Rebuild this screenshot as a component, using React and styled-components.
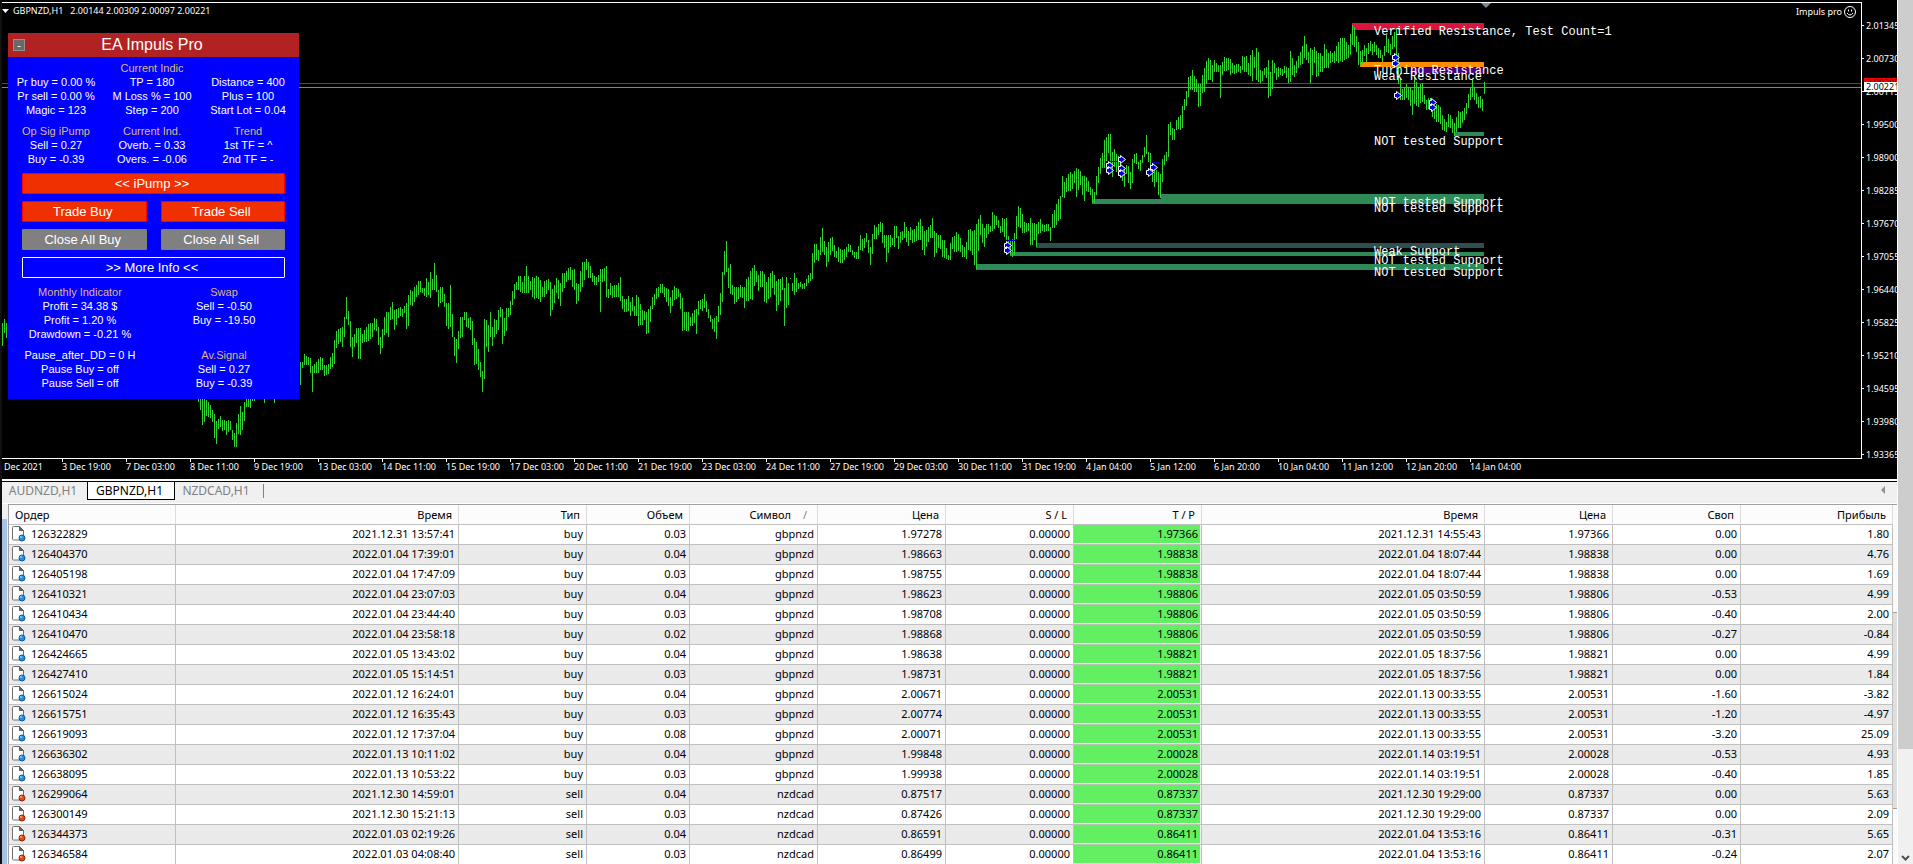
import React from 'react'
import styled, { createGlobalStyle } from 'styled-components'

const GlobalStyle = createGlobalStyle`
  * {
    box-sizing: border-box;
  }

  body {
    margin: 0;
    background: #f0f0f0;
    font-family: 'Noto Sans', 'Open Sans', sans-serif;
    font-size: 11px;
    color: #000;
  }

  button {
    margin: 0;
    padding: 0;
    font: inherit;
    cursor: pointer;
  }
`

// x, high, low. Bars are 2px apart, missing ones are interpolated.
const BARS = `
2,323,346 4,319,333 6,323,338 60,340,360 150,360,380 196,380,396 200,390,410 202,392,425 206,400,416 212,410,422
214,414,438 216,421,444 218,419,429 220,416,427 224,420,430 226,421,435 230,421,430 232,430,440 234,433,447 236,423,447
238,414,434 240,406,435 242,412,430 244,402,421 246,395,407 250,392,408 252,385,401 262,380,396 264,384,403 266,380,396
272,380,396 274,384,403 276,376,390 298,364,380 300,362,385 302,362,368 304,354,365 308,357,365 310,358,373 312,366,392
314,364,373 318,359,373 322,358,370 324,365,376 328,364,374 332,353,367 334,340,364 336,331,348 340,328,342 342,327,347
344,317,337 346,297,319 348,311,325 350,321,347 352,337,357 354,334,347 356,328,343 358,328,359 360,328,359 362,334,343
364,330,342 368,324,341 370,323,339 374,318,330 376,319,331 378,327,345 380,337,354 382,329,348 384,317,335 386,312,333
388,312,337 390,307,320 392,302,319 394,310,330 396,309,325 398,308,318 402,309,317 404,306,313 406,303,329 408,295,326
410,290,305 414,287,302 416,285,297 418,281,295 420,281,292 422,288,293 424,288,296 426,278,297 428,282,295 430,272,298
432,279,290 434,263,290 436,275,292 438,290,307 442,287,302 444,294,307 446,303,326 448,303,329 450,285,327 452,314,337
454,337,356 456,339,363 458,331,349 460,317,338 462,317,337 464,312,320 466,312,327 468,318,328 470,317,330 472,321,345
474,338,365 476,342,364 478,349,370 480,362,377 482,371,392 484,319,379 486,320,347 488,325,352 490,312,337 492,327,346
494,319,337 496,320,334 498,310,330 500,307,317 502,309,344 504,318,336 506,308,331 508,308,317 510,301,315 512,291,305
514,284,299 516,282,290 518,276,290 520,276,292 522,282,293 524,276,293 526,266,293 528,276,293 530,281,290 532,277,297
536,276,298 540,280,302 542,287,297 544,281,297 548,279,290 550,282,316 552,289,310 556,278,293 560,283,306 562,273,292
566,271,282 570,267,280 574,269,290 576,283,304 578,284,301 582,262,287 586,259,270 588,262,278 592,273,282 596,277,285
598,275,282 600,269,312 602,269,282 604,268,281 606,266,297 608,289,298 610,283,295 616,285,297 618,283,297 620,277,301
622,296,309 626,299,312 628,296,311 630,302,316 632,297,311 634,306,316 636,295,316 638,297,326 640,304,325 644,311,320
646,312,334 648,309,333 650,306,322 652,297,309 656,288,299 658,287,297 662,284,293 664,287,297 668,289,306 670,297,313
672,290,306 674,286,300 678,289,297 680,293,309 682,298,331 684,312,330 688,312,331 690,317,326 692,313,326 694,310,323
696,309,334 698,301,315 700,300,309 704,294,308 706,301,312 708,309,318 710,315,322 714,318,332 716,316,339 718,306,322
720,293,315 722,272,302 724,251,275 726,241,272 728,268,288 730,264,294 732,285,295 734,287,304 738,287,299 742,287,298
744,287,308 746,279,301 748,277,301 752,268,300 754,265,286 756,271,282 758,275,291 762,271,287 764,274,302 766,282,303
770,273,297 772,271,288 774,275,295 776,281,311 780,279,301 782,277,290 784,288,326 786,277,308 788,283,305 790,278,279
792,283,291 794,273,295 796,278,292 798,283,289 802,284,289 806,279,286 810,273,281 812,253,279 814,244,263 816,244,260
818,250,261 822,228,252 824,241,255 826,247,267 828,242,262 832,237,251 834,245,257 836,251,258 838,247,262 840,249,263
846,247,257 848,244,252 852,250,255 856,252,259 858,246,259 860,235,250 864,238,248 866,233,242 868,240,253 870,247,265
872,234,254 874,225,239 876,227,239 880,222,232 882,223,243 884,235,248 886,235,262 888,235,253 892,238,245 894,226,247
896,226,238 898,236,249 902,231,240 904,222,238 908,231,246 910,227,240 914,229,242 918,222,240 920,219,240 922,226,250
924,231,255 926,230,247 930,225,238 932,218,238 934,231,257 938,235,248 944,240,258 948,255,260 950,243,260 952,237,249
956,232,252 960,238,252 964,247,257 966,242,259 968,230,250 972,231,255 974,230,265 976,224,269 980,215,235 984,228,247
986,224,238 990,226,232 992,212,231 996,216,225 1000,226,233 1002,218,232 1006,218,240 1008,236,243 1010,240,255
1014,233,255 1016,216,239 1018,206,227 1022,214,233 1024,222,233 1028,223,231 1030,218,245 1034,223,240 1036,224,247
1038,222,234 1040,219,233 1042,224,231 1048,224,231 1050,227,241 1052,214,228 1056,204,225 1060,196,219 1062,176,197
1064,182,198 1066,178,192 1070,172,191 1074,171,183 1076,168,197 1080,171,185 1084,176,201 1086,177,191 1090,187,195
1092,189,203 1094,192,203 1096,176,195 1098,167,183 1102,153,168 1104,140,168 1108,134,153 1110,134,163 1112,152,177
1114,149,167 1116,154,172 1120,160,170 1124,167,187 1126,165,174 1128,166,183 1130,172,189 1132,159,183 1134,154,163
1136,153,164 1138,162,169 1140,160,171 1142,155,163 1144,147,157 1146,135,154 1148,152,162 1150,153,173 1154,167,187
1156,170,182 1158,172,195 1160,174,198 1162,159,182 1164,155,165 1166,152,161 1168,124,157 1170,122,135 1174,129,140
1176,120,130 1180,115,130 1182,106,128 1184,99,110 1186,91,106 1188,77,97 1190,76,90 1192,70,90 1196,79,92 1198,84,107
1200,84,106 1202,75,93 1204,68,92 1206,61,84 1208,58,80 1210,60,80 1212,65,82 1214,60,72 1218,65,72 1220,65,98
1222,62,75 1224,57,71 1228,58,70 1230,59,75 1232,63,73 1236,64,73 1240,66,73 1242,56,70 1246,56,72 1248,63,75
1252,50,81 1254,57,68 1256,48,80 1258,52,82 1260,70,83 1264,68,75 1266,67,78 1268,60,98 1270,72,96 1272,60,89
1274,63,73 1276,68,80 1280,68,75 1284,66,73 1288,68,83 1290,51,82 1292,58,75 1294,65,77 1298,56,68 1300,52,65
1304,36,58 1306,44,60 1308,52,63 1310,48,83 1314,47,63 1316,51,77 1318,53,76 1322,56,72 1324,44,68 1328,53,68
1332,53,62 1336,46,61 1338,42,63 1342,38,62 1344,38,60 1348,45,58 1350,34,55 1352,25,45 1354,27,47 1356,36,52
1358,42,65 1360,51,66 1364,45,56 1366,48,62 1368,43,54 1374,42,52 1378,48,58 1382,55,62 1384,46,56 1386,35,52
1390,44,55 1392,36,49 1394,32,47 1396,28,55 1398,53,84 1400,78,100 1402,89,100 1406,84,98 1408,87,100 1412,90,115
1414,77,104 1418,87,107 1420,84,103 1422,83,102 1424,95,104 1426,100,110 1430,98,110 1434,108,119 1436,104,122
1440,107,124 1444,119,131 1446,122,132 1448,114,127 1452,119,133 1454,123,136 1458,111,128 1460,112,128 1462,111,123
1466,103,114 1468,94,108 1470,87,100 1472,80,97 1474,88,100 1478,97,108 1482,99,111 1484,82,94
`

function buildBarsPath (source) {
  const points = source.trim().split(/\s+/).map(p => p.split(',').map(Number))
  let path = ''
  points.forEach(([x, high, low], i) => {
    path += `M${x + 0.5} ${high}V${low}`
    const next = points[i + 1]
    if (!next) return
    for (let step = x + 2; step < next[0]; step += 2) {
      const t = (step - x) / (next[0] - x)
      const wobble = (step * 7) % 5 - 2
      const h = Math.round(high + (next[1] - high) * t + wobble)
      const l = Math.round(low + (next[2] - low) * t + wobble)
      path += `M${step + 0.5} ${h}V${l}`
    }
  })
  return path
}

const BARS_PATH = buildBarsPath(BARS)

const ZONE_END = 1484

const ZONES = [
  { x: 1352, y: 23, h: 7, color: '#dc143c' },
  { x: 1360, y: 62, h: 5, color: '#ff8c00' },
  { x: 1411, y: 68, h: 5, color: '#4b0082' },
  { x: 1455, y: 132, h: 4, color: '#2e8b57' },
  { x: 1161, y: 194, h: 10, color: '#2e8b57' },
  { x: 1092, y: 199, h: 5, color: '#2e8b57' },
  { x: 1036, y: 243, h: 5, color: '#2f4f4f' },
  { x: 1010, y: 252, h: 4, color: '#2e8b57' },
  { x: 976, y: 264, h: 6, color: '#2e8b57' }
]

const ZONE_LABELS = [
  [35, 'Verified Resistance, Test Count=1'],
  [74, 'Turning Resistance'],
  [80, 'Weak Resistance'],
  [145, 'NOT tested Support'],
  [206, 'NOT tested Support'],
  [212, 'NOT tested Support'],
  [255, 'Weak Support'],
  [264, 'NOT tested Support'],
  [276, 'NOT tested Support']
]

const ARROWS = [
  [1004, 242], [1004, 247], [1106, 162], [1106, 167], [1118, 156], [1118, 165], [1118, 170],
  [1150, 164], [1146, 169], [1392, 54], [1392, 60], [1394, 92], [1429, 99], [1429, 104]
]

const DASHES = [[1008, 240], [1110, 161], [1123, 163], [1152, 162], [1431, 97]]

const PRICES = [
  '2.01345', '2.00730', '2.00115', '1.99500', '1.98900', '1.98285', '1.97670',
  '1.97055', '1.96440', '1.95825', '1.95210', '1.94595', '1.93980', '1.93365'
]

const DATES = [
  '3 Dec 19:00', '7 Dec 03:00', '8 Dec 11:00', '9 Dec 19:00', '13 Dec 03:00', '14 Dec 11:00',
  '15 Dec 19:00', '17 Dec 03:00', '20 Dec 11:00', '21 Dec 19:00', '23 Dec 03:00', '24 Dec 11:00',
  '27 Dec 19:00', '29 Dec 03:00', '30 Dec 11:00', '31 Dec 19:00', '4 Jan 04:00', '5 Jan 12:00',
  '6 Jan 20:00', '10 Jan 04:00', '11 Jan 12:00', '12 Jan 20:00', '14 Jan 04:00'
]

const COLUMNS = [
  ['Ордер', 167], ['Время', 283], ['Тип', 128], ['Объем', 103], ['Символ', 128], ['Цена', 128],
  ['S / L', 128], ['T / P', 128], ['Время', 283], ['Цена', 128], ['Своп', 128], ['Прибыль', 152]
]

// order, open time, type, volume, symbol, open price, t/p, close time, swap, profit
const ORDERS = [
  ['126322829', '2021.12.31 13:57:41', 'buy', '0.03', 'gbpnzd', '1.97278', '1.97366', '2021.12.31 14:55:43', '0.00', '1.80'],
  ['126404370', '2022.01.04 17:39:01', 'buy', '0.04', 'gbpnzd', '1.98663', '1.98838', '2022.01.04 18:07:44', '0.00', '4.76'],
  ['126405198', '2022.01.04 17:47:09', 'buy', '0.03', 'gbpnzd', '1.98755', '1.98838', '2022.01.04 18:07:44', '0.00', '1.69'],
  ['126410321', '2022.01.04 23:07:03', 'buy', '0.04', 'gbpnzd', '1.98623', '1.98806', '2022.01.05 03:50:59', '-0.53', '4.99'],
  ['126410434', '2022.01.04 23:44:40', 'buy', '0.03', 'gbpnzd', '1.98708', '1.98806', '2022.01.05 03:50:59', '-0.40', '2.00'],
  ['126410470', '2022.01.04 23:58:18', 'buy', '0.02', 'gbpnzd', '1.98868', '1.98806', '2022.01.05 03:50:59', '-0.27', '-0.84'],
  ['126424665', '2022.01.05 13:43:02', 'buy', '0.04', 'gbpnzd', '1.98638', '1.98821', '2022.01.05 18:37:56', '0.00', '4.99'],
  ['126427410', '2022.01.05 15:14:51', 'buy', '0.03', 'gbpnzd', '1.98731', '1.98821', '2022.01.05 18:37:56', '0.00', '1.84'],
  ['126615024', '2022.01.12 16:24:01', 'buy', '0.04', 'gbpnzd', '2.00671', '2.00531', '2022.01.13 00:33:55', '-1.60', '-3.82'],
  ['126615751', '2022.01.12 16:35:43', 'buy', '0.03', 'gbpnzd', '2.00774', '2.00531', '2022.01.13 00:33:55', '-1.20', '-4.97'],
  ['126619093', '2022.01.12 17:37:04', 'buy', '0.08', 'gbpnzd', '2.00071', '2.00531', '2022.01.13 00:33:55', '-3.20', '25.09'],
  ['126636302', '2022.01.13 10:11:02', 'buy', '0.04', 'gbpnzd', '1.99848', '2.00028', '2022.01.14 03:19:51', '-0.53', '4.93'],
  ['126638095', '2022.01.13 10:53:22', 'buy', '0.03', 'gbpnzd', '1.99938', '2.00028', '2022.01.14 03:19:51', '-0.40', '1.85'],
  ['126299064', '2021.12.30 14:59:01', 'sell', '0.04', 'nzdcad', '0.87517', '0.87337', '2021.12.30 19:29:00', '0.00', '5.63'],
  ['126300149', '2021.12.30 15:21:13', 'sell', '0.03', 'nzdcad', '0.87426', '0.87337', '2021.12.30 19:29:00', '0.00', '2.09'],
  ['126344373', '2022.01.03 02:19:26', 'sell', '0.04', 'nzdcad', '0.86591', '0.86411', '2022.01.04 13:53:16', '-0.31', '5.65'],
  ['126346584', '2022.01.03 04:08:40', 'sell', '0.03', 'nzdcad', '0.86499', '0.86411', '2022.01.04 13:53:16', '-0.24', '2.07']
]

function PlotDrawing () {
  return (
    <Drawing aria-hidden='true'>
      <g transform='translate(-2 -3)'>
        <g shapeRendering='crispEdges'>
          {ZONES.map(z => (
            <rect key={`${z.x}-${z.y}`} x={z.x} y={z.y} width={ZONE_END - z.x} height={z.h} fill={z.color} />
          ))}
          <path d='M0 83.5H4000' stroke='#c01c1c' />
          <path d='M0 87.5H4000' stroke='#778899' />
          <path d={BARS_PATH} stroke='#32d232' />
          {DASHES.map(([x, y]) => (
            <path key={x} d={`M${x} ${y + 0.5}h8`} stroke='#0000c8' strokeDasharray='3 1' />
          ))}
        </g>
        <path d='M1481 3h10l-5 5z' fill='#778899' />
        {ARROWS.map(([x, y]) => (
          <path
            key={`${x}-${y}`}
            transform={`translate(${x} ${y})`}
            d='M0.5 1.5h2v-2l5 4l-5 4v-2h-2z'
            fill='#0000e0'
            stroke='#fff'
          />
        ))}
        <ZoneText>
          {ZONE_LABELS.map(([y, text]) => (
            <text key={y} x='1374' y={y}>{text}</text>
          ))}
        </ZoneText>
      </g>
    </Drawing>
  )
}

function Stat ({ title, lines, blank }) {
  return (
    <div>
      {(title || blank) && <StatTitle>{title || '\u00a0'}</StatTitle>}
      {lines.map(line => <div key={line}>{line}</div>)}
    </div>
  )
}

function AdvisorPanel () {
  return (
    <Panel>
      <PanelHeader>
        <CollapseButton aria-label='Collapse'>-</CollapseButton>
        <PanelTitle>EA Impuls Pro</PanelTitle>
      </PanelHeader>
      <PanelBody>
        <Stats $columns={3}>
          <Stat blank lines={['Pr buy = 0.00 %', 'Pr sell = 0.00 %', 'Magic = 123']} />
          <Stat title='Current Indic' lines={['TP = 180', 'M Loss % = 100', 'Step = 200']} />
          <Stat blank lines={['Distance = 400', 'Plus = 100', 'Start Lot = 0.04']} />
        </Stats>
        <Stats $columns={3}>
          <Stat title='Op Sig iPump' lines={['Sell = 0.27', 'Buy = -0.39']} />
          <Stat title='Current Ind.' lines={['Overb. = 0.33', 'Overs. = -0.06']} />
          <Stat title='Trend' lines={['1st TF = ^', '2nd TF = -']} />
        </Stats>
        <Actions>
          <ActionButton $tone='red' $wide>&lt;&lt; iPump &gt;&gt;</ActionButton>
          <ActionButton $tone='red'>Trade Buy</ActionButton>
          <ActionButton $tone='red'>Trade Sell</ActionButton>
          <ActionButton $tone='gray'>Close All Buy</ActionButton>
          <ActionButton $tone='gray'>Close All Sell</ActionButton>
          <ActionButton $tone='outline' $wide>&gt;&gt; More Info &lt;&lt;</ActionButton>
        </Actions>
        <Stats $columns={2}>
          <Stat title='Monthly Indicator' lines={['Profit = 34.38 $', 'Profit = 1.20 %', 'Drawdown = -0.21 %']} />
          <Stat title='Swap' lines={['Sell = -0.50', 'Buy = -19.50']} />
        </Stats>
        <Stats $columns={2}>
          <Stat lines={['Pause_after_DD = 0 H', 'Pause Buy = off', 'Pause Sell = off']} />
          <Stat title='Av.Signal' lines={['Sell = 0.27', 'Buy = -0.39']} />
        </Stats>
      </PanelBody>
    </Panel>
  )
}

function Chart () {
  return (
    <ChartArea>
      <ChartTop>
        <Plot>
          <PlotDrawing />
          <PlotCaption>
            <svg width='7' height='4'><path d='M0 0h7l-3.500 4z' fill='#fff' /></svg>
            <span>GBPNZD,H1&nbsp;&nbsp; 2.00144 2.00309 2.00097 2.00221</span>
          </PlotCaption>
          <ExpertName>
            Impuls pro
            <svg width='12' height='12' fill='none' stroke='#fff'>
              <circle cx='6' cy='6' r='5.500' />
              <path d='M3 7q3 4 6 0M4.500 3.500v2M7.500 3.500v2' />
            </svg>
          </ExpertName>
          <AdvisorPanel />
        </Plot>
        <PriceAxis>
          {PRICES.map(price => <Price key={price}>{price}</Price>)}
          <AskTag>2.00290</AskTag>
          <BidTag>2.00221</BidTag>
        </PriceAxis>
      </ChartTop>
      <DateAxis>
        <FirstDate>Dec 2021</FirstDate>
        {DATES.map(date => <DateMark key={date}>{date}</DateMark>)}
      </DateAxis>
    </ChartArea>
  )
}

function OrderIcon ({ type }) {
  const color = type === 'buy' ? '#1e90e0' : '#e04818'
  const edge = type === 'buy' ? '#0c5c9c' : '#942408'
  return (
    <svg width='15' height='16' aria-hidden='true'>
      <path d='M1.500 1.500q0-1 1-1h6l4 4v8.500q0 1-1 1h-9q-1 0-1-1z' fill='#fff' stroke='#707070' />
      <path d='M8.500 .5v4h4z' fill='#606060' stroke='#606060' />
      <circle cx='11' cy='12' r='3' fill={color} stroke={edge} />
      <circle cx='10' cy='11' r='1' fill='#fff' fillOpacity='.6' />
    </svg>
  )
}

function Orders () {
  return (
    <OrdersTable>
      <colgroup>
        {COLUMNS.map(([name, width], i) => <col key={i} width={width} />)}
      </colgroup>
      <thead>
        <tr>
          {COLUMNS.map(([name], i) => (
            <HeadCell key={i} $left={i === 0}>
              {name}
              {name === 'Символ' && <SortMark>/</SortMark>}
            </HeadCell>
          ))}
        </tr>
      </thead>
      <tbody>
        {ORDERS.map(([id, opened, type, volume, symbol, price, target, closed, swap, profit]) => (
          <Row key={id}>
            <Cell>
              <OrderId><OrderIcon type={type} />{id}</OrderId>
            </Cell>
            <Cell>{opened}</Cell>
            <Cell>{type}</Cell>
            <Cell>{volume}</Cell>
            <Cell>{symbol}</Cell>
            <Cell>{price}</Cell>
            <Cell>0.00000</Cell>
            <TargetCell>{target}</TargetCell>
            <Cell>{closed}</Cell>
            <Cell>{target}</Cell>
            <Cell>{swap}</Cell>
            <Cell>{profit}</Cell>
          </Row>
        ))}
      </tbody>
    </OrdersTable>
  )
}

function App () {
  return (
    <Page>
      <GlobalStyle />
      <Main>
        <Chart />
        <Tabs>
          <Tab>AUDNZD,H1</Tab>
          <Tab $active>GBPNZD,H1</Tab>
          <Tab>NZDCAD,H1</Tab>
          <TabDivider />
          <TabScroll aria-label='Scroll tabs'>
            <svg width='4' height='8'><path d='M4 0v8l-4-4z' fill='#909090' /></svg>
          </TabScroll>
        </Tabs>
        <Terminal>
          <TerminalEdge />
          <TableFrame><Orders /></TableFrame>
          <InnerScroll><InnerThumb /></InnerScroll>
        </Terminal>
      </Main>
      <Scrollbar>
        <ScrollThumb />
        <svg width='9' height='6' fill='none' stroke='#505050' strokeWidth='2'><path d='M1 1l3.500 3.500l3.500-3.500' /></svg>
      </Scrollbar>
    </Page>
  )
}

const Page = styled.div`
  display: flex;
  height: 100vh;
  overflow: hidden;
  border-left: 2px solid #101010;
`

const Main = styled.main`
  display: flex;
  flex: 1;
  flex-direction: column;
  min-width: 0;
  border-right: 1px solid #fff;
`

const ChartArea = styled.section`
  flex: none;
  padding-top: 2px;
  background: #000;
  color: #fff;
  font-size: 9px;
  line-height: 12px;
  overflow: hidden;
`

const ChartTop = styled.div`
  display: flex;
  height: 457px;
`

const Plot = styled.div`
  position: relative;
  flex: 1;
  min-width: 0;
  border: 1px solid #fff;
  border-left: 0;
`

const Drawing = styled.svg`
  display: block;
  width: 100%;
  height: 100%;
`

const ZoneText = styled.g`
  fill: #fff;
  font-family: 'Liberation Mono', monospace;
  font-size: 12px;
`

const PlotCaption = styled.div`
  position: absolute;
  top: 2px;
  left: 0;
  display: flex;
  align-items: center;
  gap: 4px;
`

const ExpertName = styled.div`
  position: absolute;
  top: 3px;
  right: 5px;
  display: flex;
  align-items: center;
  gap: 2px;
`

const PriceAxis = styled.div`
  position: relative;
  flex: none;
  width: 35px;
  padding-top: 7px;
  overflow: hidden;
`

const Price = styled.div`
  display: flex;
  align-items: center;
  gap: 2px;
  height: 33px;

  &::before {
    content: '';
    flex: none;
    width: 2px;
    height: 1px;
    background: #fff;
  }
`

const PriceTag = styled.div`
  position: absolute;
  left: 2px;
  right: 0;
  padding-left: 2px;
  line-height: 10px;
`

const AskTag = styled(PriceTag)`
  top: 76px;
  background: #f00000;
  color: #600000;
`

const BidTag = styled(PriceTag)`
  top: 80px;
  background: #fff;
  color: #000;
`

const DateAxis = styled.div`
  display: flex;
  height: 20px;
  overflow: hidden;
  line-height: 10px;
  white-space: nowrap;
`

const FirstDate = styled.div`
  flex: none;
  width: 60px;
  padding: 3px 0 0 2px;
`

const DateMark = styled.div`
  flex: none;
  width: 64px;

  &::before {
    content: '';
    display: block;
    width: 1px;
    height: 3px;
    background: #fff;
  }
`

const Panel = styled.section`
  position: absolute;
  top: 30px;
  left: 6px;
  width: 291px;
  background: #0000ff;
  font-family: 'Liberation Sans', Arial, sans-serif;
  font-size: 11px;
  line-height: 14px;
  text-align: center;
`

const PanelHeader = styled.header`
  display: flex;
  align-items: center;
  height: 24px;
  padding: 0 20px 0 5px;
  background: #b22222;
`

const CollapseButton = styled.button`
  width: 12px;
  height: 12px;
  border: 1px solid #909090;
  background: #696969;
  color: #fff;
  line-height: 10px;
`

const PanelTitle = styled.h1`
  flex: 1;
  margin: 0;
  font-size: 16px;
  font-weight: 400;
  line-height: 24px;
`

const PanelBody = styled.div`
  display: flex;
  flex-direction: column;
  gap: 7px;
  padding: 4px 0 9px;
`

const Stats = styled.div`
  display: grid;
  grid-template-columns: repeat(${p => p.$columns}, 1fr);
  padding-right: 3px;
  white-space: nowrap;
`

const StatTitle = styled.div`
  color: #deb887;
`

const Actions = styled.div`
  display: grid;
  grid-template-columns: 1fr 1fr;
  gap: 7px 14px;
  padding: 0 14px;
`

const TONES = {
  red: { background: '#f03000', border: '#ff0000' },
  gray: { background: '#808080', border: '#808080' },
  outline: { background: '#0000ff', border: '#ffffff' }
}

const ActionButton = styled.button`
  grid-column: ${p => p.$wide ? 'span 2' : 'auto'};
  height: 21px;
  padding-right: 3px;
  border: 1px solid ${p => TONES[p.$tone].border};
  border-radius: 1px;
  background: ${p => TONES[p.$tone].background};
  color: #fff;
  font-size: 13px;
  line-height: 19px;
`

const Tabs = styled.nav`
  display: flex;
  flex: none;
  height: 23px;
  border-top: 1px solid #000;
  border-bottom: 1px solid #fff;
  box-shadow: 0 -2px 0 #fff;
  margin-top: 2px;
`

const Tab = styled.button`
  width: ${p => p.$active ? '88px' : '85px'};
  height: 18px;
  padding-right: 3px;
  border: solid #000;
  border-width: ${p => p.$active ? '0 1px 1px' : '0'};
  background: ${p => p.$active ? '#fff' : 'transparent'};
  color: ${p => p.$active ? '#000' : '#808080'};
  font-size: 12px;
  line-height: 16px;
`

const TabDivider = styled.div`
  width: 1px;
  height: 14px;
  margin: 2px 0 0 3px;
  background: #808080;
`

const TabScroll = styled.button`
  display: flex;
  align-items: center;
  margin-left: auto;
  padding: 0 12px;
  height: 16px;
  border: 0;
  background: transparent;
`

const Terminal = styled.section`
  display: flex;
  flex: 1;
  min-height: 0;
`

const TerminalEdge = styled.div`
  flex: none;
  width: 5px;
  margin-top: 15px;
  background: #a9c1e2;
`

const TableFrame = styled.div`
  flex: 1;
  min-width: 0;
  margin-left: 1px;
  border: solid #a0a0a0;
  border-width: 1px 0 0 1px;
  background: #fff;
  overflow: hidden;
`

const OrdersTable = styled.table`
  width: 100%;
  table-layout: fixed;
  border-spacing: 0;
  text-align: right;
  white-space: nowrap;
`

const HeadCell = styled.th`
  height: 20px;
  padding: 0 6px;
  border: solid #dcdcdc;
  border-width: 0 1px 1px 0;
  border-bottom-color: #c0c0c0;
  background: #fcfcfc;
  font-weight: 400;
  line-height: 19px;
  text-align: ${p => p.$left ? 'left' : 'right'};
`

const SortMark = styled.span`
  padding: 0 4px 0 12px;
  color: #808080;
`

const Row = styled.tr`
  background: #fff;

  &:nth-child(even) {
    background: #eaeaea;
  }
`

const Cell = styled.td`
  height: 20px;
  padding: 0 3px 2px 2px;
  border: solid #c0c0c0;
  border-width: 0 1px 1px 0;
  line-height: 17px;
`

const TargetCell = styled(Cell)`
  background: #62f062;
  box-shadow: inset -1px -1px 0 #f0fff0;
`

const OrderId = styled.div`
  display: flex;
  align-items: center;
  gap: 5px;
  height: 17px;
`

const InnerScroll = styled.div`
  flex: none;
  width: 4px;
  padding-top: 107px;
  border-top: 1px solid #a0a0a0;
  background: #fafafa;
`

const InnerThumb = styled.div`
  height: 78%;
  border: solid #a0a0a0;
  border-width: 1px 0;
  background: #dedede;
`

const Scrollbar = styled.div`
  display: flex;
  flex: none;
  flex-direction: column;
  align-items: center;
  justify-content: space-between;
  width: 15px;
  padding-bottom: 3px;
  background: #f0f0f0;
`

const ScrollThumb = styled.div`
  width: 100%;
  height: 87%;
  background: #cdcdcd;
`

export default App
